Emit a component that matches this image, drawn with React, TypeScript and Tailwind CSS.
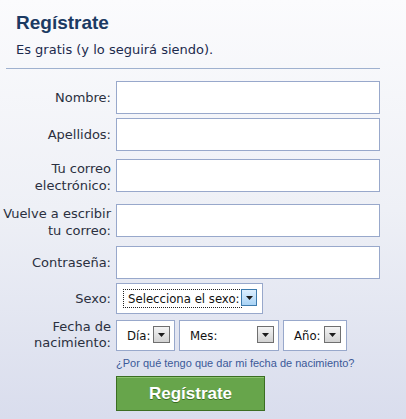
import React from "react";

const FONT = "font-['DejaVu_Sans',sans-serif]";
const NARROW = "font-['DejaVu_Sans_Condensed','DejaVu_Sans',sans-serif]";
const ARIAL = "font-['Liberation_Sans',Arial,sans-serif]";

function Arrow({ active }: { active?: boolean }) {
  return (
    <span
      className={
        active
          ? "flex h-[17px] w-[16px] items-center justify-center border border-[#3d7bad] bg-gradient-to-b from-[#dcefff] to-[#a9d3f5]"
          : "flex h-[17px] w-[17px] items-center justify-center border border-[#6f6f6f] bg-gradient-to-b from-[#f4f4f4] to-[#d2d2d2]"
      }
    >
      <svg width="7" height="4" viewBox="0 0 7 4">
        <path d="M0 0h7L3.5 4z" fill="#1b1b1b" />
      </svg>
    </span>
  );
}

function Field({ label, tall }: { label: React.ReactNode; tall?: boolean }) {
  return (
    <div className="flex items-start">
      <div
        className={`w-[116px] shrink-0 whitespace-nowrap pr-[5px] text-right text-[13px] leading-[17px] text-[#2b3040] ${
          tall ? "pt-[1px]" : "pt-[8px]"
        }`}
      >
        {label}
      </div>
      <div className="h-[33px] w-[264px] shrink-0 border border-[#98a8cb] bg-white" />
    </div>
  );
}

function DateSelect({ label, width, arrowLeft }: { label: string; width: string; arrowLeft: string }) {
  return (
    <div className={`relative h-[31px] shrink-0 border border-[#98a8cb] bg-white ${width}`}>
      <span className={`absolute left-[10px] top-[6px] whitespace-nowrap text-[13px] leading-[17px] text-[#111] ${NARROW}`}>
        {label}
      </span>
      <span className={`absolute top-[5px] ${arrowLeft}`}>
        <Arrow />
      </span>
    </div>
  );
}

export default function App() {
  return (
    <div
      className={`h-[419px] w-[406px] overflow-hidden bg-gradient-to-b from-[#fbfbfd] via-[#eef0f6] to-[#d9dded] ${FONT}`}
    >
      <div className="px-[16px] pt-[11px]">
        <h1 className={`text-[19px] font-bold leading-[24px] text-[#1c3a63] ${ARIAL}`}>Regístrate</h1>
        <p className="mt-[6px] text-[13px] leading-[17px] text-[#1c2a4d]">Es gratis (y lo seguirá siendo).</p>
      </div>
      <div className="ml-[6px] mt-[10px] h-px w-[374px] bg-[#9fb1cf]" />

      <div className="mt-[12px] flex flex-col">
        <Field label="Nombre:" />
        <div className="mt-[4px]">
          <Field label="Apellidos:" />
        </div>
        <div className="mt-[8px]">
          <Field
            tall
            label={
              <>
                Tu correo
                <br />
                electrónico:
              </>
            }
          />
        </div>
        <div className="mt-[10px]">
          <Field
            tall
            label={
              <>
                Vuelve a escribir
                <br />
                tu correo:
              </>
            }
          />
        </div>
        <div className="mt-[7px]">
          <Field label="Contraseña:" />
        </div>

        <div className="mt-[4px] flex items-start">
          <div className="w-[116px] shrink-0 pr-[5px] pt-[7px] text-right text-[13px] leading-[17px] text-[#2b3040]">Sexo:</div>
          <div className="relative h-[31px] w-[147px] shrink-0 border border-[#98a8cb] bg-white">
            <span
              className={`absolute left-[6px] top-[5px] h-[19px] w-[119px] whitespace-nowrap border border-dotted border-[#222] pl-[4px] text-[13px] leading-[17px] text-[#111] ${NARROW}`}
            >
              Selecciona el sexo:
            </span>
            <span className="absolute left-[124px] top-[5px]">
              <Arrow active />
            </span>
          </div>
        </div>

        <div className="mt-[6px] flex h-[31px] items-start">
          <div className="-mt-[1px] w-[116px] shrink-0 whitespace-nowrap pr-[5px] text-right text-[13px] leading-[16px] text-[#2b3040]">
            Fecha de
            <br />
            nacimiento:
          </div>
          <div className="flex gap-[4px]">
            <DateSelect label="Día:" width="w-[59px]" arrowLeft="left-[36px]" />
            <DateSelect label="Mes:" width="w-[100px]" arrowLeft="left-[77px]" />
            <DateSelect label="Año:" width="w-[64px]" arrowLeft="left-[40px]" />
          </div>
        </div>

        <div className={`ml-[116px] mt-[5px] text-[11px] leading-[14px] text-[#3b5998] ${ARIAL}`}>
          ¿Por qué tengo que dar mi fecha de nacimiento?
        </div>

        <button
          className={`ml-[116px] mt-[6px] h-[35px] w-[149px] border border-[#3b6e22] bg-[#67a54b] text-[17px] font-bold leading-[24px] text-white shadow-[inset_0_1px_0_#8cc26f] [text-shadow:0_1px_0_#3b6e22] ${ARIAL}`}
        >
          Regístrate
        </button>
      </div>
    </div>
  );
}
